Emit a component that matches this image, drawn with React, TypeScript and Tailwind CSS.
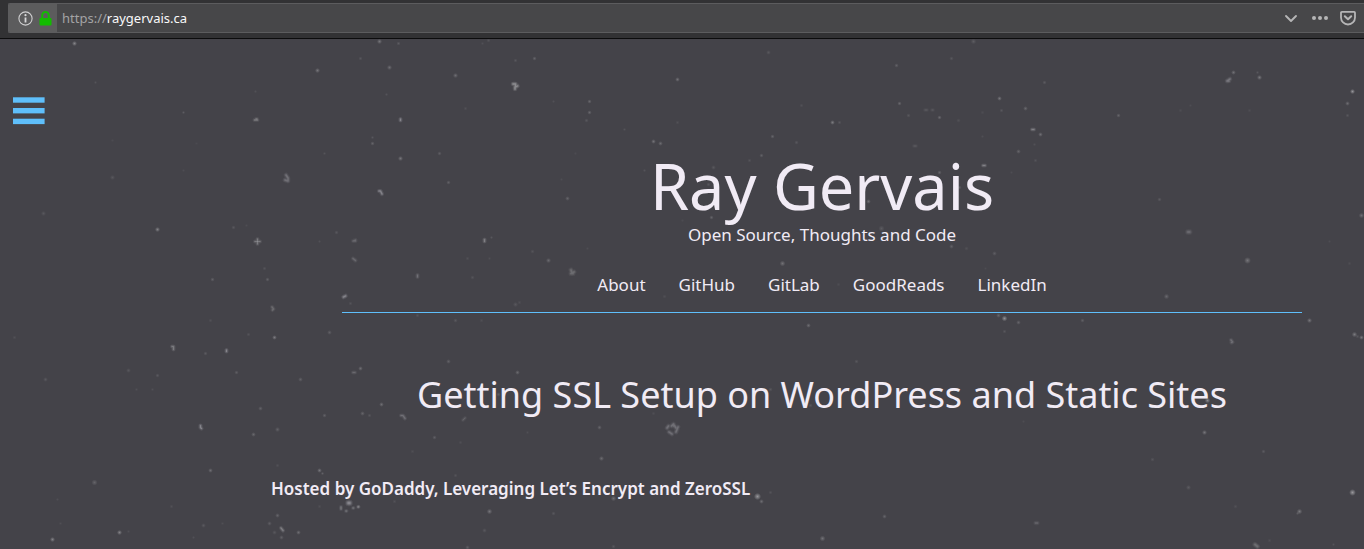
import React from "react";

type Star = [x: number, y: number, radius: number, opacity: number];

const stars: Star[] = [
  [74, 43, 1.5, 0.4], [95, 82, 1, 0.1], [183, 112, 1, 0.15], [112, 177, 1.5, 0.12], [43, 213, 1.5, 0.12],
  [157, 229, 1.5, 0.38], [183, 170, 1, 0.06], [112, 140, 1, 0.05], [196, 143, 1, 0.04],
  [379, 41, 1.5, 0.3], [398, 43, 1.2, 0.15], [360, 58, 1.2, 0.12], [389, 67, 1.5, 0.25], [317, 70, 1.5, 0.3],
  [255, 91, 1, 0.08], [386, 94, 1, 0.1], [372, 137, 1, 0.12], [372, 143, 1.3, 0.2], [324, 153, 1, 0.1],
  [400, 158, 1.5, 0.3], [439, 153, 1.3, 0.16], [448, 182, 1.3, 0.18], [233, 227, 1.3, 0.12], [246, 225, 1, 0.06],
  [336, 232, 1.3, 0.12], [319, 241, 1, 0.08], [264, 268, 1.2, 0.1], [212, 279, 1.3, 0.18], [267, 279, 1.3, 0.18],
  [455, 75, 1.5, 0.25], [515, 60, 1.2, 0.12], [534, 58, 1.3, 0.2], [482, 43, 1, 0.08], [488, 40, 1.2, 0.1],
  [465, 108, 1.2, 0.08], [553, 101, 1, 0.08], [589, 101, 1.3, 0.22], [589, 112, 1.3, 0.22], [586, 120, 1.3, 0.12],
  [624, 129, 1, 0.1], [653, 141, 1.4, 0.28], [660, 143, 1.4, 0.24], [677, 79, 1.4, 0.28], [768, 52, 1.4, 0.12],
  [677, 122, 1.2, 0.08], [832, 122, 1.4, 0.34], [839, 122, 1.2, 0.12], [801, 105, 1.2, 0.08], [772, 136, 1.3, 0.2],
  [796, 142, 1.3, 0.12], [896, 65, 1.3, 0.18], [899, 103, 1.3, 0.22], [908, 115, 1.3, 0.12], [761, 155, 1.3, 0.18],
  [749, 160, 1.2, 0.1], [713, 167, 1.4, 0.12], [644, 170, 1, 0.1], [575, 153, 1, 0.05], [567, 198, 1.4, 0.2],
  [561, 179, 1, 0.06], [708, 184, 1.3, 0.12], [677, 198, 1.3, 0.16], [868, 201, 1.4, 0.25], [711, 217, 1.3, 0.2],
  [682, 220, 1, 0.05], [881, 228, 1.8, 0.14], [782, 263, 1.7, 0.28], [548, 260, 1.5, 0.23], [491, 237, 1, 0.12],
  [532, 251, 1.3, 0.1], [587, 248, 1, 0.06], [467, 258, 1.2, 0.08], [489, 258, 1, 0.07], [472, 277, 1.3, 0.1],
  [838, 284, 1.2, 0.06], [951, 58, 1.3, 0.12], [973, 41, 1.6, 0.15], [1044, 82, 1.3, 0.14], [999, 98, 1.4, 0.3],
  [1025, 108, 1.4, 0.22], [1001, 110, 1.2, 0.12], [982, 112, 1.2, 0.06], [939, 117, 1.3, 0.23], [958, 120, 1.3, 0.08],
  [1118, 115, 1.3, 0.2], [1180, 110, 1.2, 0.06], [1190, 105, 1, 0.06], [1249, 110, 1.2, 0.06], [1233, 72, 1.4, 0.27],
  [1259, 77, 1.5, 0.32], [1257, 72, 1, 0.12], [1352, 91, 1.5, 0.5], [1347, 103, 1.4, 0.25], [1347, 115, 1.2, 0.12],
  [1040, 134, 1.4, 0.26], [1018, 151, 1.4, 0.2], [1034, 144, 1, 0.08], [1035, 160, 1.2, 0.1], [982, 136, 1, 0.07],
  [939, 172, 1.3, 0.2], [959, 187, 1.3, 0.15], [1011, 172, 1, 0.06], [1159, 199, 1.3, 0.14], [1361, 215, 1.6, 0.25],
  [1329, 241, 1, 0.06], [1349, 263, 1.2, 0.06], [1247, 260, 2, 0.3], [951, 246, 1.4, 0.18], [966, 248, 1.3, 0.08],
  [994, 253, 1.4, 0.16], [985, 268, 1, 0.05], [14, 337, 1.2, 0.08], [45, 379, 1.4, 0.13], [128, 370, 1.4, 0.12],
  [136, 389, 1, 0.08], [152, 389, 1, 0.08], [157, 375, 1.3, 0.13], [205, 353, 1.3, 0.14], [210, 320, 1.2, 0.08],
  [248, 334, 1.2, 0.1], [274, 337, 1.4, 0.34], [236, 372, 1.3, 0.16], [300, 379, 1.4, 0.18], [260, 408, 1.4, 0.18],
  [253, 434, 1.4, 0.22], [277, 429, 1.5, 0.18], [329, 332, 1.4, 0.17], [350, 303, 1.2, 0.1], [417, 315, 1.2, 0.1],
  [448, 361, 1.4, 0.18], [360, 368, 1.4, 0.25], [381, 404, 1.4, 0.26], [324, 415, 1.3, 0.18], [362, 413, 1.4, 0.2],
  [369, 415, 1.2, 0.12], [434, 437, 1.3, 0.17], [412, 451, 1.2, 0.07], [210, 470, 1.4, 0.25], [277, 465, 1.2, 0.08],
  [319, 470, 1.4, 0.3], [322, 473, 1, 0.18], [94, 482, 1.8, 0.2], [57, 499, 1, 0.07], [171, 506, 1.2, 0.08],
  [203, 525, 1.4, 0.13], [60, 523, 1, 0.07], [119, 532, 1.5, 0.38], [128, 531, 1, 0.08], [52, 539, 1.5, 0.38],
  [193, 537, 1, 0.08], [222, 523, 1, 0.07], [277, 515, 1.4, 0.2], [269, 523, 1.4, 0.16], [274, 532, 1.4, 0.12],
  [298, 532, 1.4, 0.25], [281, 537, 1.4, 0.17], [319, 506, 1.2, 0.07], [358, 506, 1.3, 0.18], [394, 501, 1.2, 0.09],
  [515, 304, 1.5, 0.12], [519, 302, 1.2, 0.07], [455, 320, 1.3, 0.13], [481, 320, 1.2, 0.07], [664, 296, 1.3, 0.07],
  [517, 372, 1.4, 0.23], [498, 394, 1.4, 0.15], [599, 427, 1.4, 0.2], [601, 458, 1.5, 0.24], [653, 413, 1.2, 0.07],
  [527, 432, 1, 0.07], [460, 442, 1.2, 0.07], [455, 475, 1.2, 0.1], [489, 511, 1.6, 0.3], [484, 530, 1.4, 0.12],
  [467, 547, 1.4, 0.16], [553, 513, 1.3, 0.12], [613, 498, 1.6, 0.26], [757, 496, 2.1, 0.5], [761, 501, 1.4, 0.25],
  [770, 492, 1.2, 0.1], [808, 325, 1.4, 0.25], [856, 361, 1.3, 0.12], [770, 389, 1.3, 0.12], [810, 405, 1.3, 0.12],
  [884, 516, 1.4, 0.2], [822, 538, 1.7, 0.28], [613, 546, 1.3, 0.12], [1166, 296, 1.6, 0.22], [998, 315, 1.4, 0.2],
  [1004, 318, 1.7, 0.46], [1018, 322, 1.4, 0.2], [1004, 331, 1.2, 0.12], [1082, 320, 1.3, 0.17], [1309, 320, 1.5, 0.3],
  [1354, 334, 1.6, 0.33], [1361, 337, 1.4, 0.3], [1357, 336, 1.2, 0.12], [1207, 400, 1.6, 0.42], [1204, 432, 1.5, 0.3],
  [1263, 451, 1.3, 0.14], [1152, 459, 1.3, 0.11], [1023, 421, 1, 0.06], [1188, 487, 1.5, 0.14], [1235, 506, 1.3, 0.08],
  [1352, 492, 2, 0.52], [1299, 511, 1.6, 0.32], [1297, 513, 1, 0.15], [1333, 544, 1, 0.1], [1269, 540, 1.2, 0.07],
];

// Irregular specks, each a short stroke with a wider, fainter halo.
const specks: [path: string, width: number, opacity: number][] = [
  ["M254.5 120h3M256 119h1", 1.6, 0.35],
  ["M286 175l2 3v3l-3-1", 2.4, 0.26],
  ["M379 191h1.5l1.5 3", 1.8, 0.42],
  ["M257.5 239v5M255 241.5h5", 1.6, 0.34],
  ["M400.5 119v1.5", 1.8, 0.42],
  ["M353 241l2.5-1v1z", 1.8, 0.22],
  ["M353 258.5l2.5 2", 2, 0.22],
  ["M417.5 275v2", 1.8, 0.26],
  ["M513 84h2.5v3l2-1M515 87v2", 2.2, 0.45],
  ["M484.5 239.5v2", 1.8, 0.38],
  ["M571 270l1 3 2-1M571 273.500h2", 2.8, 0.24],
  ["M914 146h2M925 110h2M932 110h1", 1.6, 0.14],
  ["M1032 129.500h2M983 165.500h2", 1.8, 0.38],
  ["M1227 81l3-2M1227 81h2", 2.2, 0.32],
  ["M1188 232h1.500", 3.6, 0.22],
  ["M172 346.500h1.500v3", 1.8, 0.34],
  ["M226.500 350v1.500", 1.8, 0.42],
  ["M272 307l1.500 2-1 1", 2, 0.24],
  ["M343.500 297l2-1", 2.2, 0.42],
  ["M353 372.500h2", 1.8, 0.22],
  ["M401 415.500h2l2 3", 1.8, 0.26],
  ["M200.500 425.500v2l1 1", 1.8, 0.42],
  ["M348.500 503h1", 4, 0.42],
  ["M341 507v2M346 511h.5M358 507h.5M353 508h.5", 1.8, 0.3],
  ["M281 528l2 2.500", 1.8, 0.38],
  ["M667 428l1.500-2M671.500 426l2-2v2M678 427l-2 5M669 432l3 2M674 425l2 3", 2.4, 0.26],
  ["M463 420l2-2", 1.5, 0.2],
  ["M1231 340l1.500 2-1 .5", 2, 0.26],
  ["M1035.500 523h2", 2, 0.22],
  ["M1255 544.500l2.500 2", 3, 0.24],
];

const links = ["About", "GitHub", "GitLab", "GoodReads", "LinkedIn"];

function Starfield() {
  return (
    <svg
      aria-hidden="true"
      viewBox="0 39 1364 510"
      preserveAspectRatio="xMidYMin slice"
      className="pointer-events-none absolute inset-0 h-full w-full"
    >
      <defs>
        <radialGradient id="star">
          <stop offset="0" stopColor="#e8e8ea" />
          <stop offset="0.4" stopColor="#e8e8ea" stopOpacity="0.6" />
          <stop offset="1" stopColor="#e8e8ea" stopOpacity="0" />
        </radialGradient>
      </defs>
      {stars.map(([x, y, radius, opacity]) => (
        <circle key={`${x}-${y}`} cx={x + 0.5} cy={y + 0.5} r={radius * 1.7} fill="url(#star)" opacity={opacity} />
      ))}
      <g fill="none" stroke="#dcdcdf" strokeLinecap="round" strokeLinejoin="round">
        {specks.map(([path, width, opacity]) => (
          <g key={path}>
            <path d={path} strokeWidth={width + 2.4} opacity={opacity * 0.25} />
            <path d={path} strokeWidth={width + 0.6} opacity={opacity * 0.4} />
            <path d={path} strokeWidth={width * 0.6} opacity={opacity * 0.6} />
          </g>
        ))}
      </g>
    </svg>
  );
}

function AddressBar() {
  return (
    <header className="flex h-[39px] border-b border-[#0c0c0d] bg-[#323234] pt-[3px] pb-[5px] pl-2">
      <div className="flex flex-1 overflow-hidden rounded-l-xs border border-r-0 border-[#5c5c5e] bg-[#474749]">
        <div className="flex w-12 items-center gap-[6px] bg-[#5c5c5d] pl-[9px]">
          <button type="button" aria-label="Site information" className="block">
            <svg width="15" height="15" viewBox="0 0 15 15" fill="none" className="block">
              <circle cx="7.5" cy="7.5" r="6.6" stroke="#d0d0d1" strokeWidth="1.1" />
              <path d="M7.5 6.5v5" stroke="#d8d8d9" strokeWidth="1.8" />
              <circle cx="7.5" cy="4.2" r="1.1" fill="#d8d8d9" />
            </svg>
          </button>
          <button type="button" aria-label="Secure connection" className="block">
            <svg width="13" height="15" viewBox="0 0 13 15" fill="none" className="block">
              <rect x="0.5" y="7" width="12" height="7.5" rx="1" fill="#12bc00" />
              <path d="M3.2 8V4.4a3.3 3.3 0 0 1 6.6 0V8" stroke="#12bc00" strokeWidth="2" />
            </svg>
          </button>
        </div>
        <label className="relative flex flex-1 items-center pl-[5px] font-['Noto_Sans',sans-serif] text-[13px] text-[#a3a3a4]">
          <span aria-hidden="true" className="pt-[2px]">
            https://<span className="text-[#f9f9fa]">raygervais.ca</span>
          </span>
          <input
            aria-label="Address"
            type="text"
            defaultValue="https://raygervais.ca"
            className="absolute inset-0 w-full pl-[5px] text-transparent outline-none"
          />
        </label>
        <div className="flex items-center pr-2 text-[#b5b5b6]">
          <button type="button" aria-label="Show history" className="mr-[13px]">
            <svg width="14" height="16" viewBox="0 0 14 16" fill="none" className="block">
              <path d="M2 6l5 5 5-5" stroke="currentColor" strokeWidth="1.9" strokeLinecap="round" strokeLinejoin="round" />
            </svg>
          </button>
          <button type="button" aria-label="Page actions" className="mr-[11px]">
            <svg width="18" height="16" viewBox="0 0 18 16" fill="currentColor" className="block">
              <circle cx="3" cy="8" r="2" />
              <circle cx="9" cy="8" r="2" />
              <circle cx="15" cy="8" r="2" />
            </svg>
          </button>
          <button type="button" aria-label="Save to Pocket">
            <svg width="16" height="16" viewBox="0 0 16 16" fill="none" stroke="currentColor" className="block">
              <path d="M1.9 1.9h12.2q.9 0 .9.9V7.5a7 7 0 0 1-14 0V2.8q0-.9.9-.9z" strokeWidth="1.8" />
              <path d="M4.8 6.2L8 9.3l3.2-3.1" strokeWidth="2" strokeLinecap="round" strokeLinejoin="round" />
            </svg>
          </button>
        </div>
      </div>
    </header>
  );
}

export default function App() {
  return (
    <div className="flex min-h-screen flex-col bg-[#444349] font-['Noto_Sans',sans-serif] text-[#f1ebf5]">
      <AddressBar />
      <div className="relative flex-1">
        <button type="button" aria-label="Open menu" className="absolute top-[58px] left-[13px]">
          <svg width="32" height="28" viewBox="0 0 32 28" fill="#5fbffb" className="block">
            <rect y="0.3" width="31.6" height="5.4" />
            <rect y="11" width="31.6" height="5.4" />
            <rect y="21.700" width="31.6" height="5.4" />
          </svg>
        </button>
        <div className="pt-[110px] pl-[280px]">
          <header className="mx-auto max-w-[960px] border-b border-[#5fbffb] pb-[15px] text-center">
            <h1 className="text-[63px] leading-[74px]">Ray Gervais</h1>
            <p className="text-[17px] leading-6">Open Source, Thoughts and Code</p>
            <nav className="mt-[26px] flex justify-center gap-[33px] text-[17px] leading-6">
              {links.map((label) => (
                <a key={label} href="#">
                  {label}
                </a>
              ))}
            </nav>
          </header>
          <h2 className="mt-[56px] text-center text-[36px] leading-[52px]">
            Getting SSL Setup on WordPress and Static Sites
          </h2>
        </div>
        <h3 className="mt-[56px] pb-12 pl-[271px] text-[17px] leading-6 font-semibold">
          Hosted by GoDaddy, Leveraging Let’s Encrypt and ZeroSSL
        </h3>
        <Starfield />
      </div>
    </div>
  );
}
